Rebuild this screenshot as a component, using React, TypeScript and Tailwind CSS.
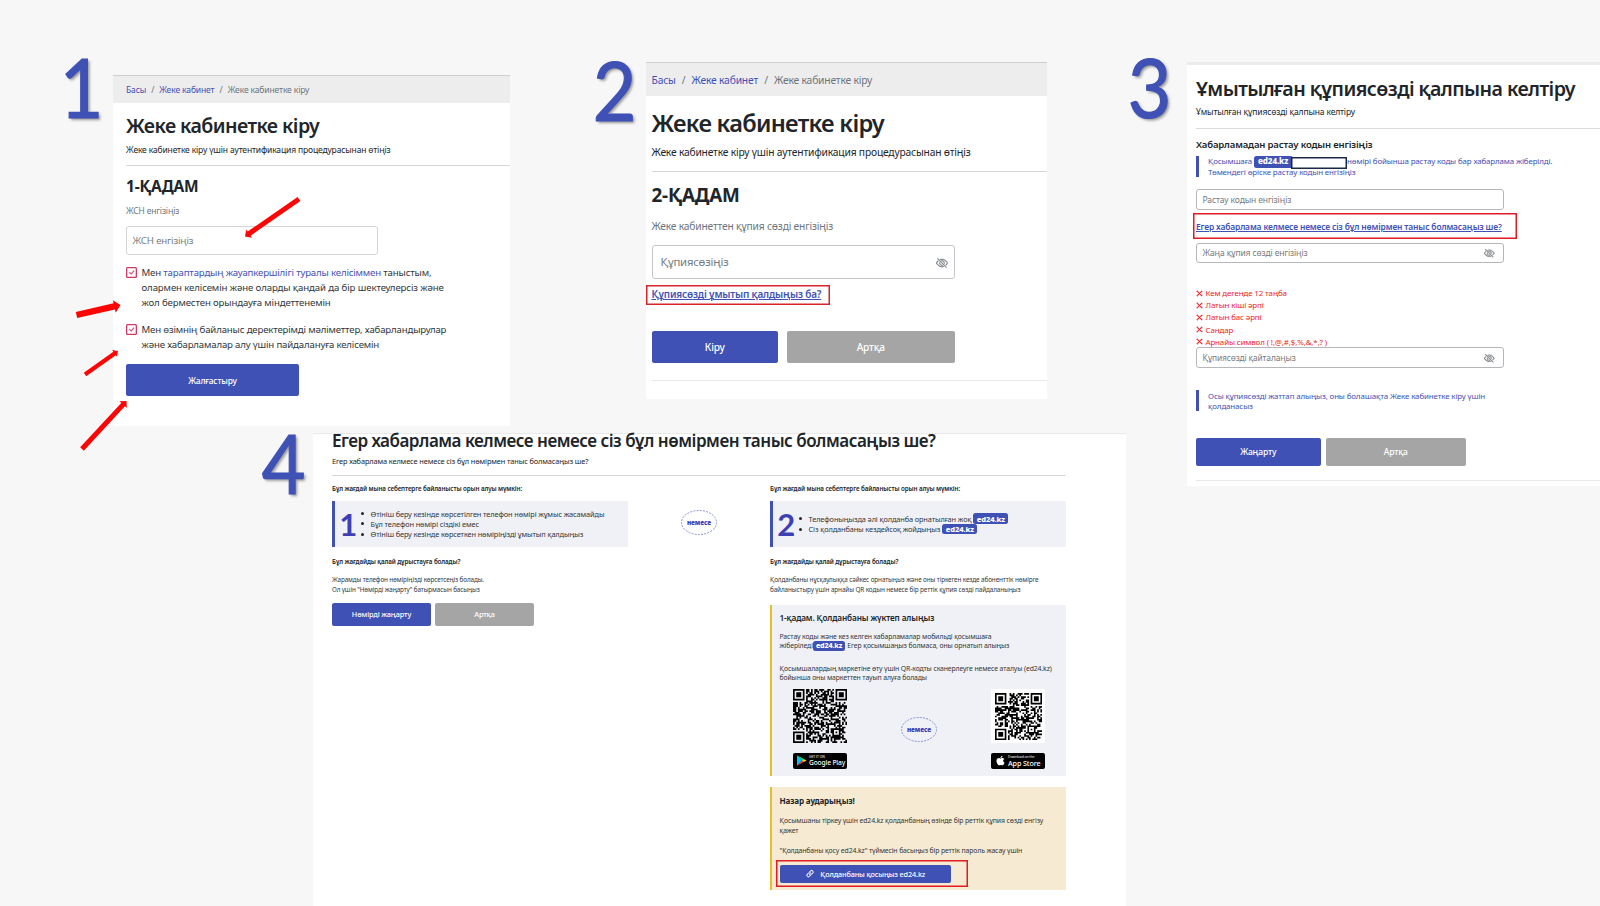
import type { ReactNode } from "react";
import { BsCheckLg, BsEyeSlash, BsLink45Deg, BsXLg } from "react-icons/bs";
import { FaApple } from "react-icons/fa";

const Numeral = ({ n, className }: { n: number; className: string }) => (
  <div
    className={`shrink-0 w-12 h-[60px] scale-x-93 text-center font-[Lato,sans-serif] text-[81px] leading-[60px] text-[#3f51b5] [-webkit-text-stroke:1.2px_#3f51b5] [text-shadow:2px_2px_3px_rgba(0,0,0,0.4)] ${className}`}
  >
    {n}
  </div>
);

const Breadcrumb = ({ className }: { className: string }) => (
  <div className={`flex items-center border-t border-[#cfcfcf] bg-[#ededed] ${className}`}>
    <span className="text-[#3f51b5]">Басы</span>
    <span className="w-[1.53em] text-center text-[#6c757d]">/</span>
    <span className="text-[#3f51b5]">Жеке кабинет</span>
    <span className="w-[1.55em] text-center text-[#6c757d]">/</span>
    <span className="text-[#6c757d]">Жеке кабинетке кіру</span>
  </div>
);

const Field = ({ text, eye, className }: { text: string; eye?: ReactNode; className: string }) => (
  <div className={`flex items-center justify-between rounded-[3px] border bg-white text-[#757b81] ${className}`}>
    <span>{text}</span>
    {eye}
  </div>
);

const Button = ({ children, gray, className }: { children: ReactNode; gray?: boolean; className: string }) => (
  <div
    className={`flex items-center justify-center rounded-[2px] font-medium text-white ${gray ? "bg-[#a5a5a5]" : "bg-[#3f51b5]"} ${className}`}
  >
    {children}
  </div>
);

const Check = ({ children, className }: { children: ReactNode; className: string }) => (
  <div className={`flex gap-[4.5px] text-[9.65px] leading-[15px] text-[#32373c] ${className}`}>
    <div className="mt-[1.6px] flex size-[11px] shrink-0 items-center justify-center rounded-[1.5px] shadow-[inset_0_0_0_1.3px_#cb3a62]">
      <BsCheckLg className="size-[7px] stroke-1 text-[#cb3a62]" />
    </div>
    <div>{children}</div>
  </div>
);

const Badge = ({ className }: { className: string }) => (
  <span className={`flex shrink-0 items-center justify-center rounded-[2.5px] bg-[#3f51b5] font-extrabold text-white ${className}`}>
    ed24.kz
  </span>
);

const Note = ({ children, className }: { children: ReactNode; className: string }) => (
  <div className={`h-[21.5px] border-l-3 border-[#3f51b5] pl-[9px] text-[7.94px] leading-[10.6px] text-[#3f51b5] ${className}`}>
    {children}
  </div>
);

const Or = () => (
  <div className="relative flex h-[25px] w-9 items-center justify-center text-[6.4px] font-black text-[#3f3fb5]">
    <svg className="absolute inset-0" width="36" height="25" viewBox="0 0 36 25">
      <ellipse cx="18" cy="12.5" rx="17.5" ry="12" fill="none" stroke="#7a86cd" strokeWidth="0.9" strokeDasharray="2 1.2" />
    </svg>
    немесе
  </div>
);

const Reason = ({ n, children }: { n: number; children: ReactNode }) => (
  <div className="mt-2 flex h-[45.7px] w-[296px] items-center border-l-3 border-[#3f51b5] bg-[#f0f1f6] pl-[4px]">
    <span className="w-[18px] text-center font-[Lato,sans-serif] text-[31px] leading-[30px] font-bold text-[#3f3fb5]">{n}</span>
    <ul className="ml-[4px] text-[7.4px] leading-[10.2px] text-[#32373c]">{children}</ul>
  </div>
);

const Item = ({ children }: { children: ReactNode }) => (
  <li className="flex items-center">
    <span className="mr-[6.5px] size-[3px] rounded-full bg-[#212529]" />
    {children}
  </li>
);

const finder = (x: number, y: number) => {
  const edge = x === 0 || x === 6 || y === 0 || y === 6;
  const core = x > 1 && x < 5 && y > 1 && y < 5;
  return edge || core;
};

const isDark = (x: number, y: number, n: number, seed: number) => {
  if (x < 8 && y < 8) return x < 7 && y < 7 && finder(x, y);
  if (x >= n - 8 && y < 8) return x >= n - 7 && y < 7 && finder(x - n + 7, y);
  if (x < 8 && y >= n - 8) return x < 7 && y >= n - 7 && finder(x, y - n + 7);
  const ax = Math.abs(x - (n - 7));
  const ay = Math.abs(y - (n - 7));
  if (ax < 3 && ay < 3) return Math.max(ax, ay) !== 1;
  const v = Math.sin(x * 12.9898 + y * 78.233 + seed) * 43758.5453;
  return v - Math.floor(v) > 0.46;
};

const Qr = ({ n, size, seed }: { n: number; size: number; seed: number }) => {
  let d = "";
  for (let y = 0; y < n; y++) for (let x = 0; x < n; x++) if (isDark(x, y, n, seed)) d += `M${x} ${y}h1.03v1.03h-1.03z`;
  return (
    <svg width={size} height={size} viewBox={`0 0 ${n} ${n}`}>
      <path d={d} fill="#000" />
    </svg>
  );
};

const StoreBadge = ({ icon, top, name, className }: { icon: ReactNode; top: string; name: string; className: string }) => (
  <div className="mt-[9.5px] flex h-4 w-[54px] items-center rounded-[2px] bg-black pl-[3.5px] text-white">
    {icon}
    <div className="ml-[2.5px]">
      <div className="text-[3.4px] leading-[4px]">{top}</div>
      <div className={`leading-[8px] font-medium ${className}`}>{name}</div>
    </div>
  </div>
);

const PlayLogo = () => (
  <svg width="10" height="11" viewBox="0 0 10 11">
    <path d="M0 0.3L5 5.5L0 10.7z" fill="#00c3ff" />
    <path d="M0 0.3L6.7 4L5 5.5z" fill="#00e676" />
    <path d="M0 10.7L6.7 7L5 5.5z" fill="#ff3a44" />
    <path d="M6.7 4L9.6 5.5L6.7 7L5 5.5z" fill="#ffd500" />
  </svg>
);

// [tail x, tail y, tip x, tip y, shaft width]
const arrows = [
  [299, 199, 245, 236.5, 5],
  [76.5, 315, 120.5, 305, 6.4],
  [85, 374.5, 118, 351, 4.2],
  [82, 449, 126.5, 401, 5],
];

const Arrow = ({ a }: { a: number[] }) => {
  const [x1, y1, x2, y2, w] = a;
  const len = Math.hypot(x2 - x1, y2 - y1);
  const deg = (Math.atan2(y2 - y1, x2 - x1) * 180) / Math.PI;
  const neck = len - w;
  const h = w / 2;
  return (
    <path
      transform={`translate(${x1} ${y1}) rotate(${deg})`}
      d={`M0 ${-h}H${neck}V${-w}L${len} 0L${neck} ${w}V${h}H0z`}
      fill="#fb0505"
    />
  );
};

const StepOne = () => (
  <section className="mt-[75px] ml-[5px] h-[350.5px] w-[397px] bg-white">
    <Breadcrumb className="h-7 pl-[13px] pt-[1.5px] text-[8.55px]" />
    <div className="pl-[13px] pt-[11.4px]">
      <h1 className="text-[19.6px] leading-6 font-semibold !tracking-[-0.03em]">Жеке кабинетке кіру</h1>
      <p className="mt-1.5 text-[8.5px] leading-3">Жеке кабинетке кіру үшін аутентификация процедурасынан өтіңіз</p>
      <hr className="mt-[9px] border-[#d5d6d7]" />
      <h2 className="mt-[9.4px] text-[15.5px] leading-5 font-bold !tracking-[-0.01em]">1-ҚАДАМ</h2>
      <p className="mt-[9px] text-[8.45px] leading-3 text-[#6c757d]">ЖСН енгізіңіз</p>
      <Field text="ЖСН енгізіңіз" className="mt-[9.6px] h-[29px] w-[252px] border-[#d3d5d8] pl-[5.5px] text-[9.65px]" />
      <Check className="mt-[9.8px]">
        Мен <span className="text-[#3f51b5]">тараптардың жауапкершілігі туралы келісіммен</span> таныстым,
        <br />
        <span className="!tracking-[-0.012em]">олармен келісемін және оларды қандай да бір шектеулерсіз және</span>
        <br />
        <span className="!tracking-[-0.014em]">жол берместен орындауға міндеттенемін</span>
      </Check>
      <Check className="mt-3">
        Мен өзімнің байланыс деректерімді мәліметтер, хабарландырулар
        <br />
        және хабарламалар алу үшін пайдалануға келісемін
      </Check>
      <Button className="mt-3 h-8 w-[173px] pt-[2px] text-[8.4px]">Жалғастыру</Button>
    </div>
  </section>
);

const StepTwo = () => (
  <section className="mt-[62px] ml-[7.5px] h-[337px] w-[401.5px] bg-white">
    <Breadcrumb className="h-[34px] pl-1.5 pt-[2px] text-[10.3px]" />
    <div className="pl-1.5 pt-[13.4px]">
      <h1 className="text-[23.6px] leading-7 font-semibold !tracking-[-0.03em]">Жеке кабинетке кіру</h1>
      <p className="mt-[7.3px] text-[10.25px] leading-[14px]">Жеке кабинетке кіру үшін аутентификация процедурасынан өтіңіз</p>
      <hr className="mt-3 border-[#d5d6d7]" />
      <h2 className="mt-[11.8px] text-[18.9px] leading-6 font-bold !tracking-[-0.012em]">2-ҚАДАМ</h2>
      <p className="mt-[11.7px] text-[10.22px] leading-[14px] text-[#6c757d]">Жеке кабинеттен құпия сөзді енгізіңіз</p>
      <Field
        text="Құпиясөзіңіз"
        eye={<BsEyeSlash className="size-3 stroke-[0.4]" />}
        className="mt-[11.7px] h-[34.5px] w-[303px] border-[#c5c7ca] pt-px pr-1.5 pl-2 text-[11.3px]"
      />
      <div className="mt-[5.5px] -ml-1.5 flex h-5 w-[184px] items-center pl-1.5 shadow-[inset_0_0_0_1.5px_#d8232a]">
        <a className="text-[9.98px] font-semibold text-[#3f51b5] underline">Құпиясөзді ұмытып қалдыңыз ба?</a>
      </div>
      <div className="mt-[26px] flex gap-[9px]">
        <Button className="h-8 w-[126.5px] pt-px text-[10.1px]">Кіру</Button>
        <Button gray className="h-8 w-[167.5px] pt-px text-[10.1px]">Артқа</Button>
      </div>
      <hr className="mt-[17.5px] border-[#e8e8e8]" />
    </div>
  </section>
);

const rules = ["Кем дегенде 12 таңба", "Латын кіші әрпі", "Латын бас әрпі", "Сандар", "Арнайы символ ( !,@,#,$,%,&,*,? )"];

const StepThree = () => (
  <section className="mt-[62px] h-[424px] w-[413px] border-t-[3px] border-[#ececec] bg-white pt-[11.6px] pl-[9px]">
    <h1 className="text-[19.65px] leading-6 font-semibold !tracking-[-0.029em]">Ұмытылған құпиясөзді қалпына келтіру</h1>
    <p className="mt-[5.5px] text-[8.53px] leading-3">Ұмытылған құпиясөзді қалпына келтіру</p>
    <hr className="mt-[9.6px] border-[#d9dadb]" />
    <h2 className="mt-[9.8px] text-[9.56px] leading-[14px] font-semibold">Хабарламадан растау кодын енгізіңіз</h2>
    <Note className="mt-[3.3px]">
      <div className="flex items-center pt-[0.5px]">
        Қосымшаға
        <Badge className="-my-1 ml-[1.5px] h-3 w-[39px] text-[8.1px]" />
        <span className="relative top-[1.5px] -my-1 -ml-[1.5px] h-3 w-14 bg-white shadow-[inset_0_0_0_1.5px_#1b2845]" />
        нөмірі бойынша растау коды бар хабарлама жіберілді.
      </div>
      Төмендегі өріске растау кодын енгізіңіз
    </Note>
    <Field text="Растау кодын енгізіңіз" className="mt-[12px] h-[20.5px] w-[307.5px] border-[#b4b6b9] pt-px pl-[5.5px] text-[8.55px]" />
    <div className="mt-[3.7px] -ml-[3px] flex h-[25.5px] w-[324px] items-center pt-[2px] pl-[3px] shadow-[inset_0_0_0_1.5px_#e01b22]">
      <a className="text-[8.45px] font-semibold text-[#3f51b5] underline">
        Егер хабарлама келмесе немесе сіз бұл нөмірмен таныс болмасаңыз ше?
      </a>
    </div>
    <Field
      text="Жаңа құпия сөзді енгізіңіз"
      eye={<BsEyeSlash className="size-[10.5px] stroke-[0.5]" />}
      className="mt-1 h-[20.5px] w-[307.5px] border-[#b4b6b9] pt-px pr-2 pl-[5.5px] text-[8.52px]"
    />
    <ul className="mt-[23.6px] text-[7.95px] leading-[12.15px] text-[#f01c24]">
      {rules.map((r) => (
        <li key={r} className="flex items-center gap-[2.5px]">
          <BsXLg className="size-[7px] stroke-2" />
          {r}
        </li>
      ))}
    </ul>
    <Field
      text="Құпиясөзді қайталаңыз"
      eye={<BsEyeSlash className="size-[10.5px] stroke-[0.5]" />}
      className="-mt-[0.5px] h-[20.5px] w-[307.5px] border-[#b4b6b9] pt-px pr-2 pl-[5.5px] text-[8.4px]"
    />
    <Note className="mt-[22px]">
      <div className="pt-[0.8px]">Осы құпиясөзді жаттап алыңыз, оны болашақта Жеке кабинетке кіру үшін</div>
      қолданасыз
    </Note>
    <div className="mt-[27px] flex gap-[5px]">
      <Button className="h-[27.5px] w-[124.5px] text-[8.55px]">Жаңарту</Button>
      <Button gray className="h-[27.5px] w-[140.5px] text-[8.55px]">Артқа</Button>
    </div>
    <hr className="mt-[14.5px] border-[#e8e8e8]" />
  </section>
);

const StepFour = () => (
  <section className="ml-[5px] h-[474px] w-[812.5px] border-t border-[#e9e9e9] bg-white pl-[19px]">
    <h1 className="-mt-[2.2px] text-[17.05px] leading-5 font-semibold !tracking-[-0.029em]">
      Егер хабарлама келмесе немесе сіз бұл нөмірмен таныс болмасаңыз ше?
    </h1>
    <p className="mt-[4.8px] text-[7.4px] leading-[10px]">Егер хабарлама келмесе немесе сіз бұл нөмірмен таныс болмасаңыз ше?</p>
    <hr className="mt-[9px] w-[734px] border-[#d5d6d7]" />
    <div className="flex w-[734px] justify-between pt-2">
      <div className="w-[296px]">
        <p className="text-[6.27px] leading-[9px] font-semibold">Бұл жағдай мына себептерге байланысты орын алуы мүмкін:</p>
        <Reason n={1}>
          <Item>Өтініш беру кезінде көрсетілген телефон нөмірі жұмыс жасамайды</Item>
          <Item>Бұл телефон нөмірі сіздікі емес</Item>
          <Item>Өтініш беру кезінде көрсеткен нөміріңізді ұмытып қалдыңыз</Item>
        </Reason>
        <p className="mt-[10.6px] text-[6.27px] leading-[9px] font-semibold">Бұл жағдайды қалай дұрыстауға болады?</p>
        <p className="mt-[9px] text-[6.32px] leading-[9.6px] text-[#32373c]">
          Жарамды телефон нөміріңізді көрсетсеңіз болады.
          <br />
          Ол үшін "Нөмірді жаңарту" батырмасын басыңыз
        </p>
        <div className="mt-2 flex gap-1">
          <Button className="h-[23px] w-[99px] text-[7.3px]">Нөмірді жаңарту</Button>
          <Button gray className="h-[23px] w-[99px] text-[7.3px]">Артқа</Button>
        </div>
      </div>
      <div className="pt-[26px]">
        <Or />
      </div>
      <div className="w-[296px]">
        <p className="text-[6.27px] leading-[9px] font-semibold">Бұл жағдай мына себептерге байланысты орын алуы мүмкін:</p>
        <Reason n={2}>
          <Item>
            Телефоныңызда әлі қолданба орнатылған жоқ
            <Badge className="-my-1 ml-[2px] h-[10.8px] w-[35px] text-[7.6px]" />
          </Item>
          <Item>
            Сіз қолданбаны кездейсоқ жойдыңыз
            <Badge className="-my-1 ml-[2px] h-[10.8px] w-[35px] text-[7.6px]" />
          </Item>
        </Reason>
        <p className="mt-[10.6px] text-[6.27px] leading-[9px] font-semibold">Бұл жағдайды қалай дұрыстауға болады?</p>
        <p className="mt-[9px] text-[6.37px] leading-[9.6px] text-[#32373c]">
          Қолданбаны нұсқаулыққа сәйкес орнатыңыз және оны тіркеген кезде абоненттік нөмірге
          <br />
          байланыстыру үшін арнайы QR кодын немесе бір реттік құпия сөзді пайдаланыңыз
        </p>
        <div className="mt-[10.6px] h-[171px] border-l-2 border-[#e2c02b] bg-[#f0f1f6] pt-[7.3px] pl-[7.5px] text-[6.87px] leading-[9.2px] text-[#32373c]">
          <h3 className="text-[8.28px] leading-3 font-semibold text-[#212529]">1-қадам. Қолданбаны жүктеп алыңыз</h3>
          <div className="mt-[7.4px]">
            Растау коды және кез келген хабарламалар мобильді қосымшаға
            <div className="flex items-center">
              жіберіледі
              <Badge className="-my-1 mr-[2px] h-[10px] w-[32.5px] text-[7.1px]" />
              Егер қосымшаңыз болмаса, оны орнатып алыңыз
            </div>
          </div>
          <p className="mt-[13.4px]">
            Қосымшалардың маркетіне өту үшін QR-кодты сканерлеуге немесе аталуы (ed24.kz)
            <br />
            бойынша оны маркеттен тауып алуға болады
          </p>
          <div className="mt-[7.4px] ml-[13.5px] flex w-[252px] justify-between">
            <div>
              <Qr n={33} size={54} seed={3} />
              <StoreBadge icon={<PlayLogo />} top="GET IT ON" name="Google Play" className="text-[6.6px]" />
            </div>
            <div className="pt-[27.5px]">
              <Or />
            </div>
            <div>
              <div className="flex size-[54px] items-center justify-center bg-white">
                <Qr n={29} size={47} seed={8} />
              </div>
              <StoreBadge icon={<FaApple className="size-[11px]" />} top="Download on the" name="App Store" className="text-[7.2px]" />
            </div>
          </div>
        </div>
        <div className="mt-[11px] h-[103px] border-l-2 border-[#e2c02b] bg-[#f6ead2] pt-[7.9px] pl-[7.5px] text-[6.87px] leading-[9.2px] text-[#32373c]">
          <h3 className="text-[8.05px] leading-3 font-bold text-[#212529]">Назар аударыңыз!</h3>
          <p className="mt-[9.3px]">
            Қосымшаны тіркеу үшін ed24.kz қолданбаның өзінде бір реттік құпия сөзді енгізу
            <br />
            қажет
          </p>
          <p className="mt-[11.1px]">"Қолданбаны қосу ed24.kz" түймесін басыңыз бір реттік пароль жасау үшін</p>
          <div className="mt-[5.1px] -ml-[3.5px] h-[26.5px] w-[191.5px] pt-[5px] pl-[3.5px] shadow-[inset_0_0_0_1.5px_#e01b22]">
            <Button className="h-[17.5px] w-[171.5px] gap-[5px] pt-px text-[7.26px]">
              <BsLink45Deg className="size-[10px] stroke-[0.5]" />
              Қолданбаны қосыңыз ed24.kz
            </Button>
          </div>
        </div>
      </div>
    </div>
  </section>
);

export default function App() {
  return (
    <div className="relative flex h-[906px] w-[1600px] overflow-hidden bg-[#f7f7f7] font-['Noto_Sans','Open_Sans',sans-serif] whitespace-nowrap text-[#212529] [&_*]:tracking-[-0.017em]">
      <div className="w-[1126px] shrink-0">
        <div className="flex h-[432.5px]">
          <Numeral n={1} className="mt-[56.5px] mr-[3px] ml-[57px]" />
          <StepOne />
          <Numeral n={2} className="mt-[60px] ml-20" />
          <StepTwo />
        </div>
        <div className="flex">
          <Numeral n={4} className="mr-[1.5px] ml-[258.5px]" />
          <StepFour />
        </div>
      </div>
      <div className="flex">
        <Numeral n={3} className="mt-[56.5px] -ml-px mr-[14px]" />
        <StepThree />
      </div>
      <svg className="pointer-events-none absolute inset-0" width="1600" height="906">
        {arrows.map((a) => (
          <Arrow key={a[0]} a={a} />
        ))}
      </svg>
    </div>
  );
}
